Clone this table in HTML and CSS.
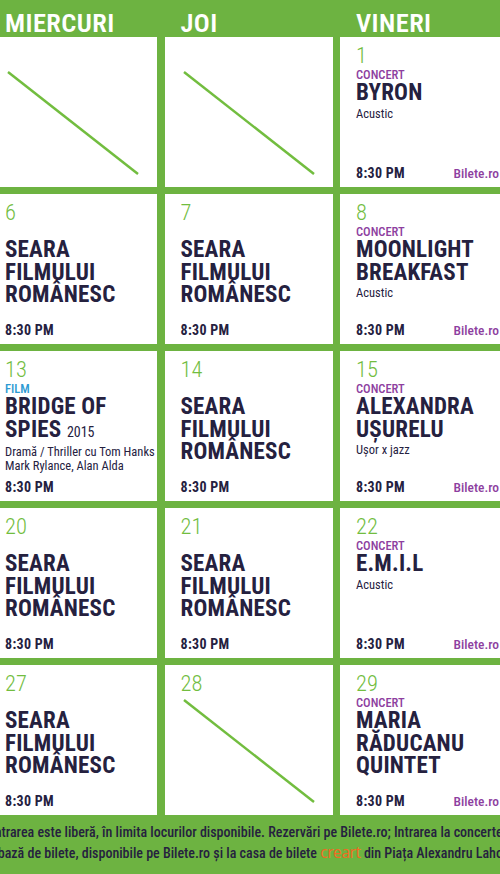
FILE: index.html
```html
<!DOCTYPE html>
<html lang="ro">
<head>
<meta charset="utf-8">
<title>Program</title>
<link rel="stylesheet" href="styles.css">
</head>
<body>
<div class="page">
  <div class="head">
    <div class="hcell">MIERCURI</div>
    <div class="hcell">JOI</div>
    <div class="hcell">VINERI</div>
  </div>
  <div class="grid">
    <!-- row 1 -->
    <div class="cell blank">
      <svg class="slash" viewBox="0 0 100 100" preserveAspectRatio="none"><line x1="0" y1="0" x2="100" y2="100"/></svg>
    </div>
    <div class="cell blank">
      <svg class="slash" viewBox="0 0 100 100" preserveAspectRatio="none"><line x1="0" y1="0" x2="100" y2="100"/></svg>
    </div>
    <div class="cell">
      <div class="day">1</div>
      <div class="cat concert">CONCERT</div>
      <div class="title">BYRON</div>
      <div class="sub">Acustic</div>
      <div class="bottom"><span class="time">8:30 PM</span><span class="tix">Bilete.ro</span></div>
    </div>
    <!-- row 2 -->
    <div class="cell">
      <div class="day">6</div>
      <div class="cat"></div>
      <div class="title">SEARA<br>FILMULUI<br>ROMÂNESC</div>
      <div class="bottom"><span class="time">8:30 PM</span></div>
    </div>
    <div class="cell">
      <div class="day">7</div>
      <div class="cat"></div>
      <div class="title">SEARA<br>FILMULUI<br>ROMÂNESC</div>
      <div class="bottom"><span class="time">8:30 PM</span></div>
    </div>
    <div class="cell">
      <div class="day">8</div>
      <div class="cat concert">CONCERT</div>
      <div class="title">MOONLIGHT<br>BREAKFAST</div>
      <div class="sub">Acustic</div>
      <div class="bottom"><span class="time">8:30 PM</span><span class="tix">Bilete.ro</span></div>
    </div>
    <!-- row 3 -->
    <div class="cell">
      <div class="day">13</div>
      <div class="cat film">FILM</div>
      <div class="title">BRIDGE OF<br>SPIES <span class="year">2015</span></div>
      <div class="sub">Dramă / Thriller cu Tom Hanks<br>Mark Rylance, Alan Alda</div>
      <div class="bottom"><span class="time">8:30 PM</span></div>
    </div>
    <div class="cell">
      <div class="day">14</div>
      <div class="cat"></div>
      <div class="title">SEARA<br>FILMULUI<br>ROMÂNESC</div>
      <div class="bottom"><span class="time">8:30 PM</span></div>
    </div>
    <div class="cell">
      <div class="day">15</div>
      <div class="cat concert">CONCERT</div>
      <div class="title">ALEXANDRA<br>UȘURELU</div>
      <div class="sub">Ușor x jazz</div>
      <div class="bottom"><span class="time">8:30 PM</span><span class="tix">Bilete.ro</span></div>
    </div>
    <!-- row 4 -->
    <div class="cell">
      <div class="day">20</div>
      <div class="cat"></div>
      <div class="title">SEARA<br>FILMULUI<br>ROMÂNESC</div>
      <div class="bottom"><span class="time">8:30 PM</span></div>
    </div>
    <div class="cell">
      <div class="day">21</div>
      <div class="cat"></div>
      <div class="title">SEARA<br>FILMULUI<br>ROMÂNESC</div>
      <div class="bottom"><span class="time">8:30 PM</span></div>
    </div>
    <div class="cell">
      <div class="day">22</div>
      <div class="cat concert">CONCERT</div>
      <div class="title">E.M.I.L</div>
      <div class="sub">Acustic</div>
      <div class="bottom"><span class="time">8:30 PM</span><span class="tix">Bilete.ro</span></div>
    </div>
    <!-- row 5 -->
    <div class="cell">
      <div class="day">27</div>
      <div class="cat"></div>
      <div class="title">SEARA<br>FILMULUI<br>ROMÂNESC</div>
      <div class="bottom"><span class="time">8:30 PM</span></div>
    </div>
    <div class="cell blank">
      <div class="day">28</div>
      <svg class="slash" viewBox="0 0 100 100" preserveAspectRatio="none"><line x1="0" y1="0" x2="100" y2="100"/></svg>
    </div>
    <div class="cell">
      <div class="day">29</div>
      <div class="cat concert">CONCERT</div>
      <div class="title">MARIA<br>RĂDUCANU<br>QUINTET</div>
      <div class="bottom"><span class="time">8:30 PM</span><span class="tix">Bilete.ro</span></div>
    </div>
  </div>
</div>
<div class="note">
  <div class="line l1">Intrarea este liberă, în limita locurilor disponibile. Rezervări pe Bilete.ro; Intrarea la concerte se face</div>
  <div class="line l2">pe bază de bilete, disponibile pe Bilete.ro și la casa de bilete <span class="creart">creart</span> din Piața Alexandru Lahovari.</div>
</div>
</body>
</html>
```
FILE: styles.css
```css
html, body {
  margin: 0;
  padding: 0;
}
body {
  width: 500px;
  height: 874px;
  overflow: hidden;
  background: #6db341;
  font-family: "Roboto Condensed", Roboto, "Liberation Sans", sans-serif;
  font-stretch: 75%;
  color: #25213f;
}
.page {
  width: 519px;
  margin-left: -11px;
}
.head {
  display: grid;
  grid-template-columns: 168px 168px 168px;
  column-gap: 7.5px;
  height: 37px;
}
.hcell {
  padding: 10px 0 0 16px;
  font-size: 26.5px;
  line-height: 26px;
  font-weight: 600;
  color: #ffffff;
  letter-spacing: 0.4px;
}
.grid {
  display: grid;
  grid-template-columns: 168px 168px 168px;
  grid-auto-rows: 150px;
  column-gap: 7.5px;
  row-gap: 7px;
}
.cell {
  position: relative;
  background: #ffffff;
  display: flex;
  flex-direction: column;
  padding: 6px 8px 6px 16px;
  box-sizing: border-box;
}
.day {
  font-size: 22.5px;
  line-height: 25px;
  font-weight: 300;
  color: #72bd3f;
}
.cat {
  height: 14px;
  font-size: 12.5px;
  line-height: 14px;
  font-weight: 500;
}
.cat.concert { color: #8e3f9f; }
.cat.film { color: #2b9ad3; }
.title {
  font-size: 23px;
  line-height: 22.5px;
  font-weight: 700;
  letter-spacing: 0.2px;
}
.year {
  font-size: 14px;
  font-weight: 400;
  letter-spacing: 0;
}
.sub {
  margin-top: 2px;
  font-size: 12.5px;
  line-height: 13.5px;
  font-weight: 400;
  white-space: nowrap;
}
.bottom {
  margin-top: auto;
  display: flex;
  justify-content: space-between;
  align-items: baseline;
  line-height: 16px;
}
.time {
  font-size: 14px;
  font-weight: 700;
  letter-spacing: 0.3px;
}
.tix {
  font-size: 13.5px;
  font-weight: 500;
  color: #8e3f9f;
  margin-right: 1px;
}
.slash {
  position: absolute;
  left: 19px;
  top: 35px;
  width: calc(100% - 38px);
  height: calc(100% - 48px);
  overflow: visible;
}
.slash line {
  stroke: #72bd3f;
  stroke-width: 2.5px;
  vector-effect: non-scaling-stroke;
}
.note {
  padding-top: 7px;
  font-size: 14px;
  line-height: 20px;
  font-weight: 500;
  color: #25213f;
}
.line {
  white-space: nowrap;
}
.l1 { margin-left: -9px; }
.l2 { margin-left: -19px; }
.creart {
  font-family: "Open Sans", "Noto Sans", sans-serif;
  font-stretch: 100%;
  font-size: 15.5px;
  font-weight: 400;
  color: #f26a21;
  letter-spacing: -0.4px;
}
```
